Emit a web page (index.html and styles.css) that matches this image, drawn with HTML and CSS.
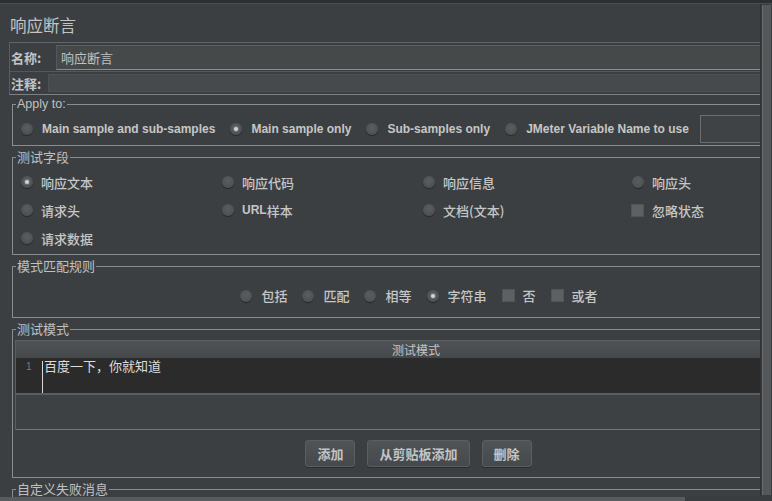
FILE: index.html
```html
<!DOCTYPE html>
<html lang="zh-CN">
<head>
<meta charset="utf-8">
<title>响应断言</title>
<link rel="stylesheet" href="styles.css">
</head>
<body>
<div class="top"></div>
<div class="main">
  <div class="viewport">
    <div class="wide">
      <div class="title">响应断言</div>
      <div class="namebox">
        <div class="name-row">
          <span class="lbl name-lbl">名称:</span>
          <div class="field big">响应断言</div>
        </div>
        <div class="note-row">
          <span class="lbl note-lbl">注释:</span>
          <div class="field small"></div>
        </div>
      </div>

      <fieldset class="box apply">
        <legend>Apply to:</legend>
        <div class="apply-row">
          <span class="opt"><span class="radio"></span><span class="en">Main sample and sub-samples</span></span>
          <span class="opt"><span class="radio on"></span><span class="en">Main sample only</span></span>
          <span class="opt"><span class="radio"></span><span class="en">Sub-samples only</span></span>
          <span class="opt"><span class="radio"></span><span class="en">JMeter Variable Name to use</span></span>
          <div class="field var"></div>
        </div>
      </fieldset>

      <fieldset class="box fields">
        <legend>测试字段</legend>
        <div class="fields-grid">
          <span class="opt"><span class="radio on"></span>响应文本</span>
          <span class="opt"><span class="radio"></span>响应代码</span>
          <span class="opt"><span class="radio"></span>响应信息</span>
          <span class="opt"><span class="radio"></span>响应头</span>
          <span class="opt"><span class="radio"></span>请求头</span>
          <span class="opt"><span class="radio"></span><span class="en">URL</span>样本</span>
          <span class="opt"><span class="radio"></span>文档(文本)</span>
          <span class="opt chk-opt"><span class="check"></span>忽略状态</span>
          <span class="opt"><span class="radio"></span>请求数据</span>
        </div>
      </fieldset>

      <fieldset class="box rules">
        <legend>模式匹配规则</legend>
        <div class="rules-row">
          <span class="opt"><span class="radio"></span>包括</span>
          <span class="opt"><span class="radio"></span>匹配</span>
          <span class="opt"><span class="radio"></span>相等</span>
          <span class="opt"><span class="radio on"></span>字符串</span>
          <span class="opt"><span class="check"></span>否</span>
          <span class="opt"><span class="check"></span>或者</span>
        </div>
      </fieldset>

      <fieldset class="box patterns">
        <legend>测试模式</legend>
        <div class="table">
          <div class="thead">测试模式</div>
          <div class="editor">
            <span class="lineno">1</span>
            <span class="caret"></span>
            <span class="code">百度一下，你就知道</span>
          </div>
          <div class="rest"></div>
        </div>
        <div class="buttons">
          <button class="btn">添加</button>
          <button class="btn">从剪贴板添加</button>
          <button class="btn">删除</button>
        </div>
      </fieldset>

      <fieldset class="box failmsg">
        <legend>自定义失败消息</legend>
      </fieldset>
    </div>
  </div>
  <div class="vscroll"><div class="vthumb"></div></div>
</div>
<div class="hscroll"><div class="hthumb"></div></div>
</body>
</html>
```
FILE: styles.css
```css
html, body {
  margin: 0;
  padding: 0;
}
body {
  width: 772px;
  height: 501px;
  overflow: hidden;
  background: #3c3f41;
  color: #bbbbbb;
  font-family: "Liberation Sans", "Noto Sans CJK SC", sans-serif;
  font-size: 13px;
}
.top {
  height: 3px;
  background: #2c2e30;
  border-bottom: 1px solid #4a4d4f;
}
.main {
  display: flex;
  height: 493px;
}
.viewport {
  width: 760px;
  height: 493px;
  overflow: hidden;
  flex: none;
}
.wide {
  margin-left: 9px;
  width: 815px;
}
.title {
  height: 36px;
  padding-top: 2px;
  line-height: 38px;
  padding-left: 1px;
  font-family: "Noto Sans CJK SC", sans-serif;
  font-size: 16.5px;
  color: #c4c4c4;
}
.namebox {
  border-top: 1px solid #62656a;
  border-left: 1px solid #5a5d5f;
  border-bottom: 1px solid #7d8082;
}
.name-row {
  display: flex;
  align-items: center;
  height: 28px;
  border-bottom: 1px solid #55585a;
}
.note-row {
  display: flex;
  align-items: center;
  height: 22px;
}
.lbl {
  flex: none;
  padding-left: 1px;
  font-family: "Noto Sans CJK SC", sans-serif;
  font-weight: 700;
  font-size: 13px;
  color: #c4c4c4;
}
.name-lbl { width: 45px; }
.note-lbl { width: 37px; }
.field {
  flex: 1;
  box-sizing: border-box;
  background: #45494a;
  border: 1px solid #55585a;
}
.field.big {
  height: 25px;
  line-height: 23px;
  padding-left: 4px;
  border-top-color: #5d6062;
  border-bottom-color: #8a8d8f;
  font-family: "Noto Sans CJK SC", sans-serif;
  font-size: 13px;
  color: #c0c0c0;
}
.field.small {
  height: 18px;
  border-color: #4e5153;
  background: #474a4c;
}

.box {
  margin: 3px 0 0 3px;
  padding: 0;
  border: 1px solid #8a8d8f;
  min-width: 0;
}
.box legend {
  margin-left: 3px;
  padding: 0 1px;
  line-height: 16px;
  font-size: 13px;
  font-family: "Noto Sans CJK SC", sans-serif;
  color: #c0c0c0;
}
.box.apply {
  margin-top: 1px;
}
.box.apply legend {
  font-family: "Liberation Sans", sans-serif;
  font-size: 12.5px;
}

.opt {
  display: inline-flex;
  align-items: center;
  white-space: nowrap;
  font-family: "Noto Sans CJK SC", sans-serif;
  font-size: 13px;
  font-weight: 500;
  color: #c6c6c6;
}
.en {
  font-family: "Liberation Sans", sans-serif;
  font-weight: 700;
  font-size: 12px;
}
.radio {
  position: relative;
  width: 12px;
  height: 12px;
  border-radius: 50%;
  background: radial-gradient(circle at 50% 40%, #5b5e61, #484b4d);
  box-shadow: 0 1px 1px rgba(0, 0, 0, 0.4);
  margin-right: 8px;
  flex: none;
}
.radio.on::after {
  content: "";
  position: absolute;
  left: 4px;
  top: 4px;
  width: 4px;
  height: 4px;
  border-radius: 50%;
  background: #d2d2d2;
  box-shadow: 0 0 1px 1px rgba(200, 200, 200, 0.25);
}
.check {
  width: 11px;
  height: 11px;
  background: #5e6163;
  border: 1px solid #525557;
  margin-right: 8px;
  flex: none;
}

.apply-row {
  display: flex;
  align-items: center;
  height: 33px;
  padding-left: 8px;
  gap: 15px;
}
.apply-row .radio { margin-right: 9px; }
.field.var {
  flex: none;
  width: 120px;
  height: 28px;
  margin-left: -4px;
  background: #404345;
  border: 1px solid #6b6e70;
}

.fields-grid {
  display: grid;
  grid-template-columns: 201px 201px 209px auto;
  grid-auto-rows: 28px;
  align-items: center;
  padding: 3px 0 2px 8px;
}
.chk-opt { margin-left: -1px; }

.rules-row {
  display: flex;
  align-items: center;
  justify-content: center;
  height: 43px;
  gap: 15px;
  padding-left: 2px;
}
.rules-row .radio { margin-right: 9px; }

.table {
  margin: 3px 2px 0 2px;
  border-left: 1px solid #5a5d5f;
}
.thead {
  height: 17px;
  border-top: 1px solid #5c5f61;
  background: linear-gradient(#505355, #46494b);
  text-align: center;
  line-height: 17px;
  font-size: 12px;
  font-family: "Noto Sans CJK SC", sans-serif;
  color: #c4c4c4;
  padding-right: 5px;
}
.editor {
  display: flex;
  align-items: flex-start;
  height: 35px;
  background: #2b2b2b;
}
.lineno {
  width: 16px;
  padding-left: 10px;
  padding-top: 1px;
  line-height: 16px;
  font-size: 10px;
  color: #7a7a7a;
}
.caret {
  width: 1px;
  height: 32px;
  margin-top: 3px;
  background: #d8d8d8;
}
.code {
  margin-left: 1px;
  padding-top: 0;
  line-height: 16px;
  font-family: "Noto Sans CJK SC", sans-serif;
  font-size: 13px;
  color: #dcdcdc;
}
.rest {
  height: 34px;
  border-top: 2px solid #5b5e60;
  border-bottom: 1px solid #74777a;
  background: #3e4143;
}
.buttons {
  display: flex;
  justify-content: center;
  gap: 12px;
  padding: 10px 0 10px 1px;
}
.btn {
  height: 27px;
  padding: 0 11px;
  border: 1px solid #5b5e60;
  border-radius: 3px;
  background: linear-gradient(#505457, #45494b);
  box-shadow: 0 1px 0 #2a2c2d;
  color: #c4c4c4;
  font-family: "Noto Sans CJK SC", sans-serif;
  font-weight: 700;
  font-size: 13px;
  line-height: 25px;
}
.box.failmsg {
  height: 40px;
}

.vscroll {
  width: 12px;
  height: 493px;
  background: #3a3d3f;
  border-left: 1px solid #2f3133;
  box-sizing: border-box;
}
.vthumb {
  margin: 1px 1px 0 1px;
  height: 490px;
  background: #55585a;
  border-left: 1px solid #66696b;
}
.hscroll {
  height: 4px;
  background: #3a3d3f;
}
.hthumb {
  width: 685px;
  height: 4px;
  background: #595c5e;
}
```
